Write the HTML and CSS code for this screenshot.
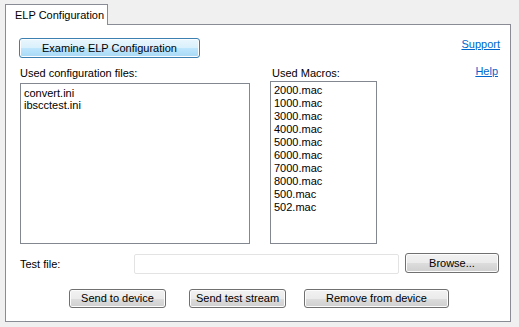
FILE: index.html
```html
<!DOCTYPE html>
<html>
<head>
<meta charset="utf-8">
<link rel="stylesheet" href="styles.css">
</head>
<body>
<div class="tabs">
  <div class="tab">ELP Configuration</div>
</div>
<div class="panel">
  <div class="row-top">
    <button class="btn btn-focus examine">Examine ELP Configuration</button>
    <a class="link" href="#">Support</a>
  </div>
  <div class="lists">
    <div class="label">Used configuration files:</div>
    <div class="label label-macros">Used Macros:</div>
    <a class="link help" href="#">Help</a>
    <div class="listbox list-config">
      <div>convert.ini</div>
      <div>ibscctest.ini</div>
    </div>
    <div class="listbox list-macros">
      <div>2000.mac</div>
      <div>1000.mac</div>
      <div>3000.mac</div>
      <div>4000.mac</div>
      <div>5000.mac</div>
      <div>6000.mac</div>
      <div>7000.mac</div>
      <div>8000.mac</div>
      <div>500.mac</div>
      <div>502.mac</div>
    </div>
  </div>
  <div class="row-test">
    <div class="test-label">Test file:</div>
    <div class="input"></div>
    <button class="btn browse">Browse...</button>
  </div>
  <div class="row-actions">
    <button class="btn send">Send to device</button>
    <button class="btn stream">Send test stream</button>
    <button class="btn remove">Remove from device</button>
  </div>
</div>
</body>
</html>
```

FILE: styles.css
```css
* { box-sizing: border-box; }
html, body {
  margin: 0;
  padding: 0;
  background: #f0f0f0;
  font-family: "Liberation Sans", Arial, sans-serif;
  font-size: 11px;
  color: #000;
}
.tabs {
  display: flex;
  padding: 4px 0 0 5px;
}
.tab {
  position: relative;
  z-index: 1;
  width: 103px;
  height: 21px;
  margin-bottom: -1px;
  background: #fff;
  border: 1px solid #898c95;
  border-bottom: none;
  padding: 4px 0 0 9px;
  font-size: 11px;
  line-height: 13px;
  white-space: nowrap;
}
.panel {
  margin-left: 5px;
  width: 506px;
  height: 298px;
  background: #fff;
  border: 1px solid #898c95;
  padding: 13px 10px 0 14px;
}
.row-top {
  display: flex;
  justify-content: space-between;
  align-items: flex-start;
  height: 20px;
}
.btn {
  font-family: "Liberation Sans", Arial, sans-serif;
  font-size: 11px;
  color: #000;
  padding: 0;
  border: 1px solid #707070;
  border-radius: 3px;
  box-shadow: inset 0 0 0 1px #fcfcfc;
  background: linear-gradient(to bottom, #f2f2f2 0%, #ebebeb 50%, #dddddd 51%, #cfcfcf 100%);
  line-height: 16px;
  text-align: center;
  white-space: nowrap;
}
.btn-focus {
  border-color: #3c7fb1;
  background: linear-gradient(to bottom, #eaf6fd 0%, #d9f0fc 50%, #bee6fd 51%, #a7d9f5 100%);
  box-shadow: inset 0 0 0 1px #fbfdfe;
}
.examine {
  width: 181px;
  height: 20px;
  margin-left: -1px;
}
.link {
  color: #0066cc;
  text-decoration: underline;
  font-size: 11px;
  line-height: 13px;
}
.row-top .link { margin-top: 0; }
.lists {
  display: grid;
  grid-template-columns: 230px 107px 1fr;
  column-gap: 20px;
  margin-top: 8px;
}
.label {
  font-size: 11px;
  line-height: 14px;
}
.label-macros { padding-left: 2px; }
.help {
  justify-self: end;
  margin-top: -1px;
  margin-right: 2px;
}
.listbox {
  border: 1px solid #828790;
  background: #fff;
  padding: 2px 3px;
  font-size: 11px;
}
.list-config {
  margin-top: 3px;
  height: 161px;
  line-height: 12px;
  padding-top: 3px;
}
.list-macros {
  margin-top: 1px;
  height: 163px;
  line-height: 13px;
  padding-top: 2px;
}
.row-test {
  display: flex;
  align-items: center;
  margin-top: 9px;
  height: 21px;
}
.test-label {
  width: 114px;
  font-size: 11px;
}
.input {
  width: 265px;
  height: 20px;
  border: 1px solid #e3e3e3;
  border-radius: 2px;
  background: #fff;
  align-self: flex-end;
}
.browse {
  width: 94px;
  height: 20px;
  margin-left: 6px;
  align-self: flex-start;
}
.row-actions {
  display: flex;
  margin-top: 15px;
  padding-left: 49px;
}
.row-actions .btn { height: 19px; line-height: 15px; }
.send { width: 97px; }
.stream { width: 97px; margin-left: 23px; }
.remove { width: 145px; margin-left: 18px; }
```
